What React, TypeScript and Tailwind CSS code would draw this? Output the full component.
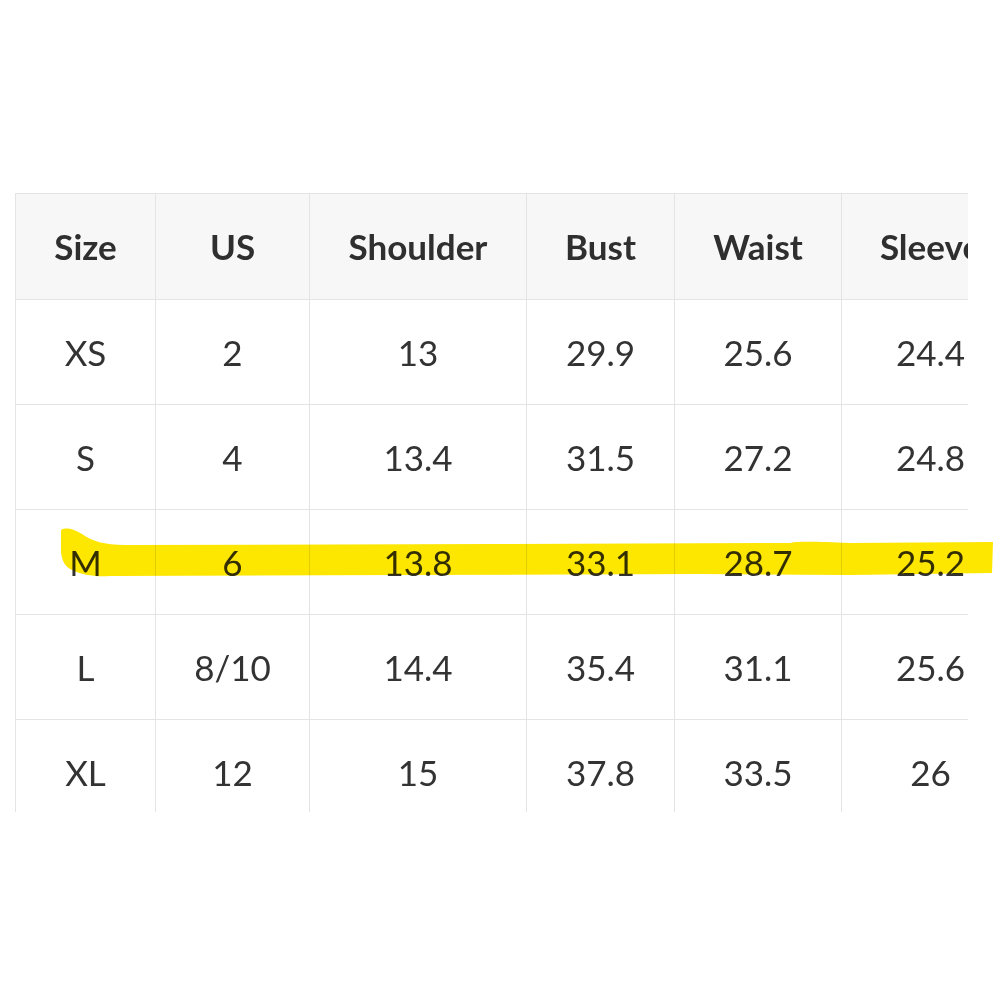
const columns = [
  { label: "Size", width: "w-[140px]" },
  { label: "US", width: "w-[154px]" },
  { label: "Shoulder", width: "w-[217px]" },
  { label: "Bust", width: "w-[148px]" },
  { label: "Waist", width: "w-[167px]" },
  { label: "Sleeve", width: "w-[178px]" },
];

const rows = [
  ["XS", "2", "13", "29.9", "25.6", "24.4"],
  ["S", "4", "13.4", "31.5", "27.2", "24.8"],
  ["M", "6", "13.8", "33.1", "28.7", "25.2"],
  ["L", "8/10", "14.4", "35.4", "31.1", "25.6"],
  ["XL", "12", "15", "37.8", "33.5", "26"],
];

const App = () => {
  return (
    <div className="relative w-[1000px] h-[1000px] bg-white overflow-hidden font-['Lato','Liberation_Sans',sans-serif] text-[#333]">
      <div className="pt-[193px] pl-[15px]">
        <div className="w-[953px] h-[619px] overflow-hidden">
          <table className="table-fixed border-collapse w-[1004px]">
            <thead>
              <tr className="bg-[#f7f7f7] h-[106px]">
                {columns.map((col, i) => (
                  <th
                    key={col.label}
                    className={`${col.width} border border-[#e4e4e4] text-[35px] font-bold text-center align-middle whitespace-nowrap text-[#2f2f2f]`}
                  >
                    {col.label}
                  </th>
                ))}
              </tr>
            </thead>
            <tbody>
              {rows.map((row) => (
                <tr key={row[0]} className="h-[105px]">
                  {row.map((cell, i) => (
                    <td
                      key={i}
                      className="border border-[#e4e4e4] text-[35px] text-center align-middle whitespace-nowrap"
                    >
                      {cell}
                    </td>
                  ))}
                </tr>
              ))}
            </tbody>
          </table>
        </div>
      </div>

      {/* marker stroke over the M row */}
      <svg
        className="absolute left-0 top-0 pointer-events-none mix-blend-multiply"
        width="1000"
        height="1000"
        viewBox="0 0 1000 1000"
      >
        <path
          d="M61 530 C66 527 74 529 82 534 C92 541 104 545 125 545 L500 544 L790 543 C800 541 820 542 850 543 L993 542 L992 573 L850 575 L700 574 L400 575 L110 576 C95 577 82 575 72 570 C64 566 62 560 61 552 Z"
          fill="#fde600"
        />
      </svg>
    </div>
  );
};

export default App;
